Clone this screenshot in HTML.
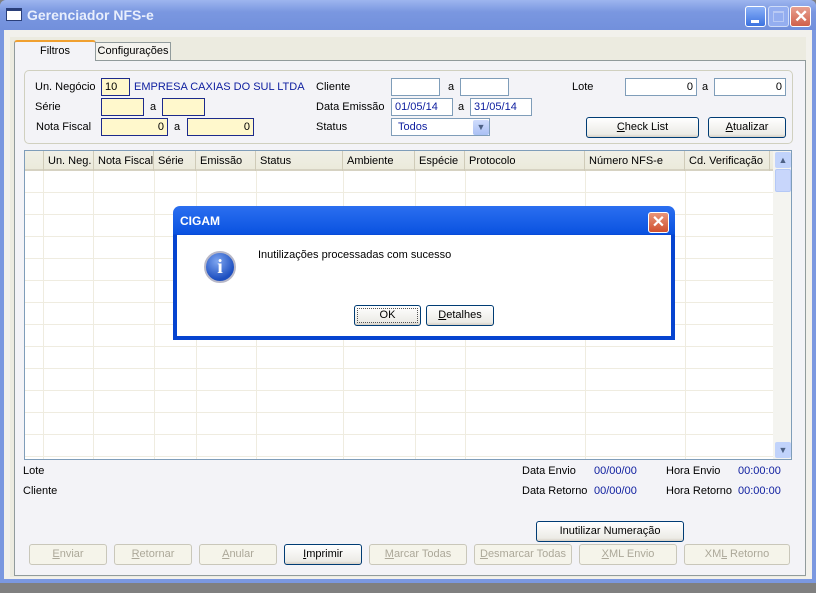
<!DOCTYPE html>
<html><head><meta charset="utf-8"><style>
*{box-sizing:border-box;margin:0;padding:0}
body{width:816px;height:593px;background:#808080;font-family:"Liberation Sans",sans-serif;font-size:11px;color:#000;position:relative;overflow:hidden}
.a{position:absolute}
.win{left:0;top:0;width:816px;height:583px;background:#7b98e0;border-radius:6px 6px 0 0}
.title{left:0;top:0;width:816px;height:30px;background:linear-gradient(#9db5ef,#7a97e0 40%,#7290dc);border-radius:6px 6px 0 0}
.client{left:4px;top:30px;width:808px;height:549px;background:#f2f1ec}
.tb{width:21px;height:21px;border:1px solid #fff;border-radius:3px}
.inp{position:absolute;background:#fff;border:1px solid #7f9db9;height:18px;font-size:11px;padding:2px 3px;color:#000;text-align:right;line-height:12px}
.y{background:#fff8cc;border-color:#1c2a8c}
.btn{position:absolute;height:21px;border:1px solid #003c74;border-radius:3px;background:linear-gradient(#fff,#ecebe6 85%,#d6d0c5);text-align:center;line-height:19px;font-size:11px}
.dis{border-color:#c9c7ba;color:#aca899;background:#f5f4ea}
.hd{position:absolute;top:0;height:20px;line-height:20px;padding-left:4px;border-left:1px solid #cfcbb8}
</style></head><body>
<div class="a win"></div>
<div class="a title"></div>
<div class="a" style="left:6px;top:8px;width:16px;height:13px;background:#fff;border:1px solid #2a3f7a;border-top:3px solid #2a3f7a"></div>
<div class="a" style="left:27px;top:7px;color:#e8eefc;font-weight:bold;font-size:14px">Gerenciador NFS-e</div>
<div class="a tb" style="left:745px;top:6px;background:linear-gradient(#8ab0f7,#3c72e0)"><div class="a" style="left:5px;top:13px;width:8px;height:3px;background:#fff"></div></div>
<div class="a tb" style="left:768px;top:6px;background:#94aef0;border-color:#cfdcf8"><div class="a" style="left:4px;top:4px;width:11px;height:11px;border:1px solid #b8c9f4;border-top-width:2px"></div></div>
<div class="a tb" style="left:790px;top:6px;background:linear-gradient(#e8a090,#d0604a)"><div class="a" style="left:3px;top:0;color:#fff;font-size:17px;font-weight:bold">✕</div></div>
<div class="a client"></div>
<div class="a" style="left:10px;top:37px;width:796px;height:540px;background:#ecebe0"></div>
<div class="a" style="left:14px;top:60px;width:792px;height:516px;background:#f3f3f7;border:1px solid #919b9c"></div>
<div class="a" style="left:14px;top:40px;width:82px;height:21px;background:#f3f3f7;border:1px solid #919b9c;border-bottom:none;border-top:2px solid #f0a030;border-radius:3px 3px 0 0;text-align:center;line-height:18px">Filtros</div>
<div class="a" style="left:95px;top:42px;width:76px;height:18px;background:#f4f3ee;border:1px solid #919b9c;border-bottom:none;text-align:center;line-height:16px">Configurações</div>
<div class="a" style="left:24px;top:70px;width:769px;height:74px;border:1px solid #d0d0bf;border-radius:5px"></div>
<div class="a" style="left:35px;top:81px">Un. Negócio</div>
<div class="a" style="left:35px;top:101px">Série</div>
<div class="a" style="left:36px;top:121px">Nota Fiscal</div>
<div class="inp y" style="left:101px;top:78px;width:29px;text-align:left">10</div>
<div class="a" style="left:134px;top:81px;color:#1020a0">EMPRESA CAXIAS DO SUL LTDA</div>
<div class="inp y" style="left:101px;top:98px;width:43px"></div>
<div class="a" style="left:150px;top:101px">a</div>
<div class="inp y" style="left:162px;top:98px;width:43px"></div>
<div class="inp y" style="left:101px;top:118px;width:67px">0</div>
<div class="a" style="left:174px;top:121px">a</div>
<div class="inp y" style="left:187px;top:118px;width:67px">0</div>
<div class="a" style="left:316px;top:81px">Cliente</div>
<div class="a" style="left:316px;top:101px">Data Emissão</div>
<div class="a" style="left:316px;top:121px">Status</div>
<div class="inp" style="left:391px;top:78px;width:49px"></div>
<div class="a" style="left:448px;top:81px">a</div>
<div class="inp" style="left:460px;top:78px;width:49px"></div>
<div class="inp" style="left:391px;top:98px;width:62px;color:#1020a0;text-align:left">01/05/14</div>
<div class="a" style="left:458px;top:101px">a</div>
<div class="inp" style="left:470px;top:98px;width:62px;color:#1020a0;text-align:left">31/05/14</div>
<div class="inp" style="left:391px;top:118px;width:99px;color:#1020a0;text-align:left;padding-left:6px">Todos</div>
<div class="a" style="left:473px;top:120px;width:16px;height:15px;background:linear-gradient(#cfdcfc,#aac0f4);border-radius:2px;color:#4d6185;font-size:9px;text-align:center;line-height:15px">▼</div>
<div class="a" style="left:572px;top:81px">Lote</div>
<div class="inp" style="left:625px;top:78px;width:72px">0</div>
<div class="a" style="left:702px;top:81px">a</div>
<div class="inp" style="left:714px;top:78px;width:72px">0</div>
<div class="btn" style="left:586px;top:117px;width:113px"><u>C</u>heck List</div>
<div class="btn" style="left:708px;top:117px;width:78px"><u>A</u>tualizar</div>
<!-- grid -->
<div class="a" style="left:24px;top:150px;width:768px;height:310px;border:1px solid #7f9db9;background:#fff repeating-linear-gradient(#fff 0 21px,#efece0 21px 22px);background-position:0 20px"></div>
<div class="a" style="left:25px;top:171px;width:748px;height:288px;background:repeating-linear-gradient(#fff 0 21px,#efece0 21px 22px)"></div>
<div class="a" style="left:25px;top:171px;width:748px;height:288px;background:linear-gradient(90deg,transparent 18px,#efece0 18px 19px,transparent 19px 68px,#efece0 68px 69px,transparent 69px 129px,#efece0 129px 130px,transparent 130px 171px,#efece0 171px 172px,transparent 172px 231px,#efece0 231px 232px,transparent 232px 318px,#efece0 318px 319px,transparent 319px 390px,#efece0 390px 391px,transparent 391px 440px,#efece0 440px 441px,transparent 441px 560px,#efece0 560px 561px,transparent 561px 660px,#efece0 660px 661px,transparent 661px)"></div>
<div class="a" style="left:25px;top:151px;width:748px;height:20px;background:linear-gradient(#f0efe6,#ebeadb);border-bottom:2px solid #d6d2c2">
<div class="hd" style="left:18px">Un. Neg.</div><div class="hd" style="left:68px">Nota Fiscal</div><div class="hd" style="left:128px">Série</div><div class="hd" style="left:170px">Emissão</div><div class="hd" style="left:230px">Status</div><div class="hd" style="left:317px">Ambiente</div><div class="hd" style="left:389px">Espécie</div><div class="hd" style="left:439px">Protocolo</div><div class="hd" style="left:559px">Número NFS-e</div><div class="hd" style="left:659px">Cd. Verificação</div><div class="hd" style="left:744px;width:4px"></div>
</div>
<div class="a" style="left:773px;top:151px;width:18px;height:308px;background:#f4f4f0"></div>
<div class="a" style="left:775px;top:152px;width:16px;height:16px;background:#c1d3fb;border-radius:2px;color:#4d6185;font-size:9px;text-align:center;line-height:16px">▲</div>
<div class="a" style="left:775px;top:169px;width:16px;height:23px;background:#c8d6fb;border:1px solid #b4c8f6;border-radius:2px"></div>
<div class="a" style="left:775px;top:442px;width:16px;height:16px;background:#c1d3fb;border-radius:2px;color:#4d6185;font-size:9px;text-align:center;line-height:16px">▼</div>
<!-- bottom -->
<div class="a" style="left:23px;top:465px">Lote</div>
<div class="a" style="left:23px;top:485px">Cliente</div>
<div class="a" style="left:522px;top:465px">Data Envio</div>
<div class="a" style="left:594px;top:465px;color:#1020a0">00/00/00</div>
<div class="a" style="left:666px;top:465px">Hora Envio</div>
<div class="a" style="left:738px;top:465px;color:#1020a0">00:00:00</div>
<div class="a" style="left:522px;top:485px">Data Retorno</div>
<div class="a" style="left:594px;top:485px;color:#1020a0">00/00/00</div>
<div class="a" style="left:666px;top:485px">Hora Retorno</div>
<div class="a" style="left:738px;top:485px;color:#1020a0">00:00:00</div>
<div class="btn" style="left:536px;top:521px;width:148px">Inutilizar Numeração</div>
<div class="btn dis" style="left:29px;top:544px;width:78px"><u>E</u>nviar</div>
<div class="btn dis" style="left:114px;top:544px;width:78px"><u>R</u>etornar</div>
<div class="btn dis" style="left:199px;top:544px;width:78px"><u>A</u>nular</div>
<div class="btn" style="left:284px;top:544px;width:78px"><u>I</u>mprimir</div>
<div class="btn dis" style="left:369px;top:544px;width:98px"><u>M</u>arcar Todas</div>
<div class="btn dis" style="left:474px;top:544px;width:98px"><u>D</u>esmarcar Todas</div>
<div class="btn dis" style="left:579px;top:544px;width:98px"><u>X</u>ML Envio</div>
<div class="btn dis" style="left:684px;top:544px;width:106px">XM<u>L</u> Retorno</div>
<!-- dialog -->
<div class="a" style="left:173px;top:206px;width:502px;height:134px;background:#0a4fd8;border-radius:7px 7px 0 0;background:linear-gradient(#2b6ff0,#0a52e0 28px,#0644d0 29px)"></div>
<div class="a" style="left:180px;top:214px;color:#fff;font-weight:bold;font-size:12px">CIGAM</div>
<div class="a" style="left:648px;top:212px;width:21px;height:21px;border:1px solid #fff;border-radius:3px;background:linear-gradient(#e8957a,#d0502f);color:#fff;font-weight:bold;font-size:16px;text-align:center;line-height:19px">✕</div>
<div class="a" style="left:177px;top:235px;width:494px;height:101px;background:#fff"></div>
<div class="a" style="left:204px;top:251px;width:32px;height:32px;border-radius:50%;background:radial-gradient(circle at 40% 30%,#7fa6f0,#1d4fc0 70%);border:2px solid #b8b8c8;color:#fff;font-weight:bold;font-family:'Liberation Serif',serif;font-size:20px;text-align:center;line-height:28px">i</div>
<div class="a" style="left:258px;top:249px">Inutilizações processadas com sucesso</div>
<div class="btn" style="left:354px;top:305px;width:67px;outline:1px dotted #555;outline-offset:-4px">OK</div>
<div class="btn" style="left:426px;top:305px;width:68px"><u>D</u>etalhes</div>
</body></html>
